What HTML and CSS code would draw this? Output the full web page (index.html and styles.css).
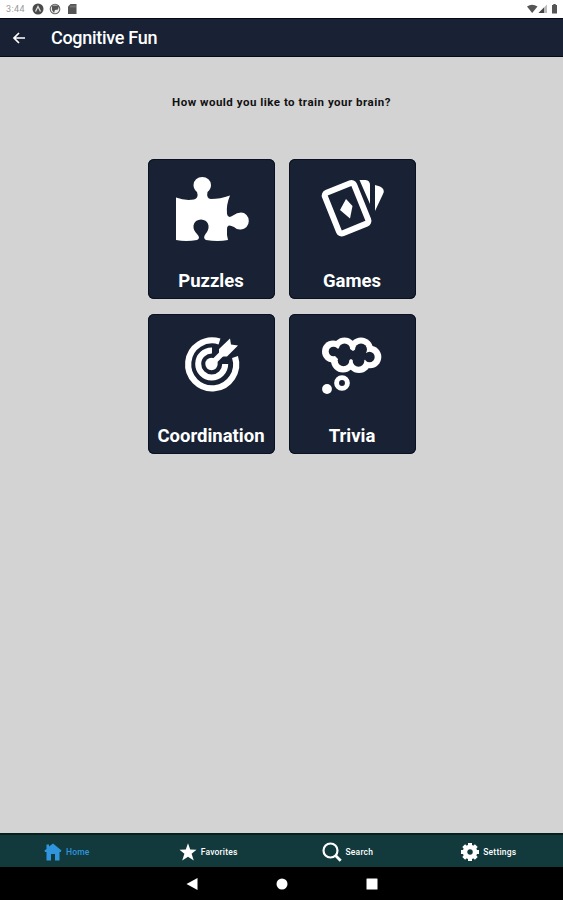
FILE: index.html
```html
<!DOCTYPE html>
<html lang="en">
<head>
    <meta charset="UTF-8">
    <meta name="viewport" content="width=device-width, initial-scale=1.0">
    <title>Cognitive Fun</title>
    <link rel="stylesheet" href="styles.css">
</head>
<body>
    <!-- Status bar -->
    <div class="status">
        <span class="time">3:44</span>
        <svg class="status-left" width="46" height="12" viewBox="0 0 46 12">
            <circle cx="6" cy="6" r="5.5" fill="#4a4a4a"/>
            <path d="M3.5 8.5L6 3.5L8.5 8.5" fill="none" stroke="#ddd" stroke-width="1.3"/>
            <circle cx="23" cy="6" r="4.8" fill="#eee" stroke="#666" stroke-width="1.1"/>
            <path d="M20 2.5h7l-1 4-3 .5-1 3-2-3z" fill="#555"/>
            <path d="M38.5 1h6v10H36V3.5z" fill="#555"/>
            <path d="M39 2.5v2M41 2.5v2M43 2.5v2" stroke="#999" stroke-width=".8"/>
        </svg>
        <svg class="status-right" width="32" height="12" viewBox="0 0 32 12">
            <path d="M0 3.5Q5 0 10.5 3.5L5.2 10z" fill="#555"/>
            <path d="M20 1.5V10H11.5z" fill="#bbb"/>
            <path d="M17 4.5V10H11.5z" fill="#444"/>
            <path d="M25 2h1.3V1h2.4v1H30v8.5h-5z" fill="#555"/>
        </svg>
    </div>

    <!-- Title bar -->
    <header class="header">
        <svg width="14" height="14" viewBox="0 0 14 14">
            <path d="M13 7H2.5M7 2L2 7L7 12" fill="none" stroke="#fff" stroke-width="1.7"/>
        </svg>
        <h1>Cognitive Fun</h1>
    </header>

    <!-- Categories -->
    <main class="main">
        <p class="question">How would you like to train your brain?</p>
        <div class="grid">
            <div class="tile">
                <svg width="127" height="104" viewBox="0 0 127 104" fill="#fff">
                    <path d="M28 38.5Q37 42 46 40.5Q51 39 49 33Q45.5 30 45.5 26A8.7 8 0 0 1 63 26Q63 30 59.5 33Q58 39.5 63 40Q72 40 82 36.5Q78 46 79 55Q80 60 85 56.5Q89 53.5 93 53.5A7.8 8.5 0 0 1 93 70.5Q89 71 86 68Q79 64 79 70Q78.5 76 80 81Q70 83 58 81Q54.5 79 57.5 75Q61 71 60.5 66.5A7.6 7.3 0 0 0 45.5 66.5Q45 71 49 75Q53 79 49 81Q38 83 28 81Z"/>
                </svg>
                <span>Puzzles</span>
            </div>
            <div class="tile">
                <svg width="127" height="104" viewBox="0 0 127 104" fill="#fff">
                    <rect x="41.8" y="27.5" width="31.5" height="43.5" rx="3" transform="rotate(-22 57.5 49.2)" fill="none" stroke="#fff" stroke-width="6"/>
                    <path d="M57 40L63.5 47L61 59.5L51 51Z"/>
                    <path d="M70.5 21H76.5Q81 21.5 81 26V45Z"/>
                    <path d="M86 26L91 27.5Q96.5 30 94 35L86 52Z"/>
                </svg>
                <span>Games</span>
            </div>
            <div class="tile">
                <svg width="127" height="104" viewBox="0 0 127 104">
                    <g fill="none" stroke="#fff">
                        <path d="M71.5 27.5A24 24 0 1 0 87 43" stroke-width="6.2"/>
                        <path d="M64 36.5A13.5 13.5 0 1 0 77.2 50" stroke-width="6"/>
                        <path d="M63.5 50L79 34.5" stroke-width="5.5"/>
                    </g>
                    <circle cx="63.5" cy="50" r="6.2" fill="#fff"/>
                    <path d="M71 35L82 24.5L83 30.5L90 31.5L79 42.5L71 42.5Z" fill="#fff"/>
                </svg>
                <span>Coordination</span>
            </div>
            <div class="tile">
                <svg width="127" height="104" viewBox="0 0 127 104">
                    <!-- cloud: white lobes with the dark middle on top -->
                    <g fill="#fff">
                        <circle cx="44" cy="37.5" r="11"/>
                        <circle cx="55.5" cy="35" r="11.5"/>
                        <circle cx="72" cy="35.5" r="12"/>
                        <circle cx="81" cy="43" r="11.3"/>
                        <circle cx="54" cy="46.5" r="12"/>
                        <circle cx="70" cy="47" r="12"/>
                    </g>
                    <g fill="#182234">
                        <circle cx="44.5" cy="37.5" r="4.8"/>
                        <circle cx="55.5" cy="35" r="5.6"/>
                        <circle cx="72" cy="35.5" r="6"/>
                        <circle cx="80.5" cy="43" r="5.2"/>
                        <circle cx="54.5" cy="46.5" r="5.8"/>
                        <circle cx="69.5" cy="47" r="5.8"/>
                        <path d="M46 35L58 33L64 37L70 33L81 42L70 50L62 45L54 50L46 42Z"/>
                    </g>
                    <circle cx="53" cy="69" r="5.4" fill="none" stroke="#fff" stroke-width="4.9"/>
                    <circle cx="38" cy="75" r="4.9" fill="#fff"/>
                </svg>
                <span>Trivia</span>
            </div>
        </div>
    </main>

    <!-- Bottom tabs -->
    <nav class="tabs">
        <div class="tab active">
            <svg width="18" height="18" viewBox="0 0 18 18">
                <path d="M9 .5L17.5 7.5L16.5 9H15.5V17.5H11V11H7V17.5H2.5V9H1L.5 7.5L2.5 6V1.5H5V3.5Z" fill="#2f95dc"/>
            </svg>
            <span>Home</span>
        </div>
        <div class="tab tab-favorites">
            <svg width="18" height="18" viewBox="0 0 18 18">
                <path d="M9 .3L11.2 6.5L17.5 6.7L12.6 10.7L14.8 17.5L9 13.7L3.2 17.5L5.4 10.7L.5 6.7L6.8 6.5Z" fill="#fff"/>
            </svg>
            <span>Favorites</span>
        </div>
        <div class="tab tab-search">
            <svg width="20" height="20" viewBox="0 0 20 20">
                <circle cx="8.5" cy="8.5" r="7" fill="none" stroke="#fff" stroke-width="2.2"/>
                <path d="M13.5 13.5L18.7 18.7" stroke="#fff" stroke-width="2.8"/>
            </svg>
            <span>Search</span>
        </div>
        <div class="tab tab-settings">
            <svg width="18" height="18" viewBox="0 0 18 18">
                <circle cx="9" cy="9" r="5" fill="none" stroke="#fff" stroke-width="4.5"/>
                <path d="M9 0V3M9 15V18M0 9H3M15 9H18M2.7 2.7L4.5 4.5M13.5 13.5L15.3 15.3M15.3 2.7L13.5 4.5M4.5 13.5L2.7 15.3" stroke="#fff" stroke-width="4"/>
            </svg>
            <span>Settings</span>
        </div>
    </nav>

    <!-- System navigation -->
    <div class="system">
        <svg width="12" height="12" viewBox="0 0 12 12"><path d="M11.5 0V12L.5 6Z" fill="#fff"/></svg>
        <svg width="12" height="12" viewBox="0 0 12 12"><circle cx="6" cy="6" r="5.5" fill="#fff"/></svg>
        <svg width="12" height="12" viewBox="0 0 12 12"><rect x=".5" y=".5" width="11" height="11" rx=".5" fill="#fff"/></svg>
    </div>
</body>
</html>
```
FILE: styles.css
```css
* {
    box-sizing: border-box;
}
body {
    display: flex;
    flex-direction: column;
    height: 900px;
    margin: 0;
    background: #d3d3d3;
    font-family: Roboto, sans-serif;
    overflow: hidden;
}
svg {
    display: block;
    flex-shrink: 0;
}
.status {
    display: flex;
    align-items: center;
    height: 18px;
    padding: 0 4px 0 6px;
    background: #fff;
}
.time {
    width: 26px;
    color: #999;
    font-size: 9px;
    letter-spacing: 0.4px;
}
.status-right {
    margin-left: auto;
}
.header {
    display: flex;
    align-items: center;
    gap: 25px;
    height: 39px;
    padding: 0 12px;
    background: #182234;
    border-top: 1px solid #050a14;
    border-bottom: 1px solid #050a14;
}
.header h1 {
    margin: 0;
    color: #fff;
    font-size: 18px;
    font-weight: 500;
    letter-spacing: -0.3px;
}
.main {
    flex: 1;
    display: flex;
    flex-direction: column;
    align-items: center;
}
.question {
    margin: 37px 0 0;
    height: 65px;
    color: #111;
    font-size: 11.5px;
    font-weight: 700;
    letter-spacing: 0.5px;
    line-height: 16px;
}
.grid {
    display: grid;
    grid-template-columns: 127px 127px;
    gap: 15px 14px;
}
.tile {
    height: 140px;
    background: #182234;
    border-radius: 6px;
    box-shadow: inset 0 0 0 1px #0a1120;
    text-align: center;
}
.tile span {
    display: block;
    margin-top: 6px;
    color: #fff;
    font-size: 18.5px;
    font-weight: 700;
    line-height: 24px;
    white-space: nowrap;
}
.tabs {
    display: grid;
    grid-template-columns: repeat(4, 1fr);
    height: 34px;
    background: #123a3c;
    border-top: 2px solid #06201f;
}
.tab {
    display: flex;
    align-items: center;
    gap: 4px;
    padding: 2px 0 0 44px;
    color: #fff;
    font-size: 8.5px;
    font-weight: 500;
    letter-spacing: 0.2px;
}
.tab span {
    margin-top: -1px;
}
.active {
    color: #2f95dc;
}
.tab-favorites {
    padding-left: 38px;
}
.tab-search {
    padding-left: 40px;
}
.tab-settings {
    padding-left: 39px;
}
.system {
    display: flex;
    align-items: center;
    justify-content: center;
    gap: 78px;
    height: 33px;
    background: #000;
}
```
